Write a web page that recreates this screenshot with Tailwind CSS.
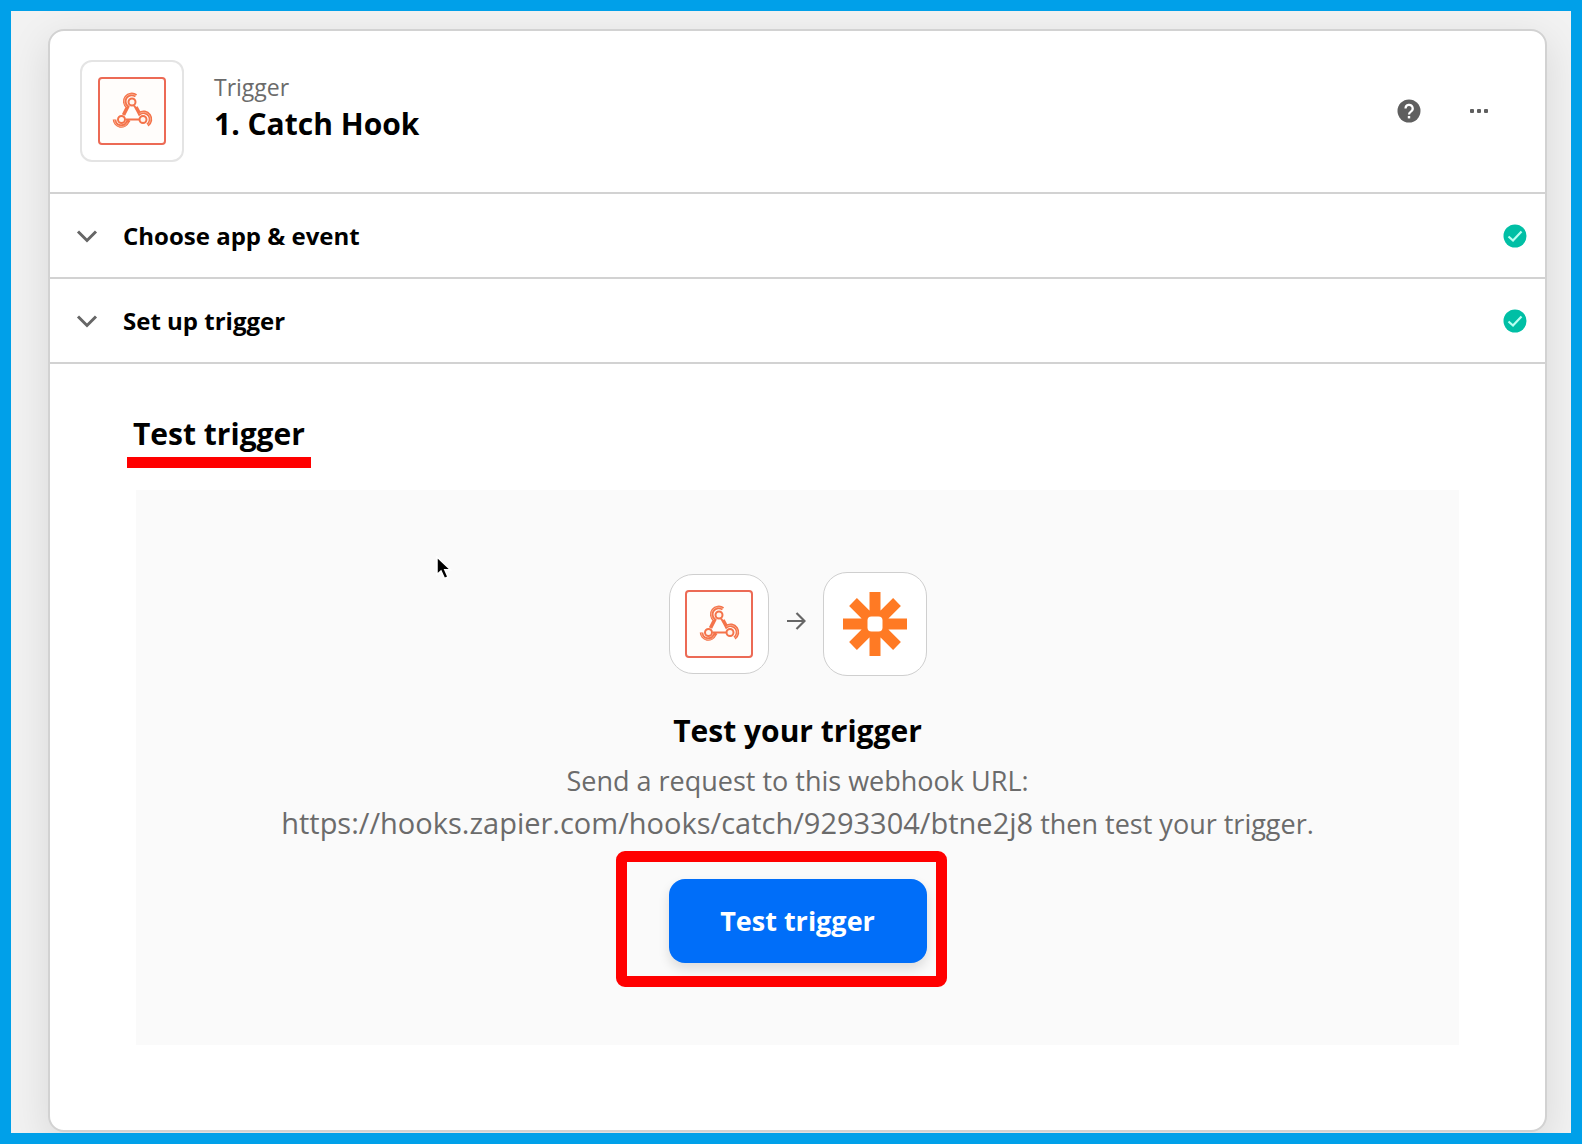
<!DOCTYPE html>
<html lang="en">
<head>
    <meta charset="UTF-8">
    <meta name="viewport" content="width=device-width, initial-scale=1.0">
    <title>Catch Hook - Test trigger</title>
    <script src="https://cdn.jsdelivr.net/npm/@tailwindcss/browser@4"></script>
</head>
<body class="flex min-h-screen border-[11px] border-[#00a0e9] bg-[#f2f2f2] font-['Open_Sans',sans-serif] text-black">

    <!-- Webhook icon, shared by both tiles -->
    <svg class="hidden">
        <symbol id="webhook" viewBox="0 0 68 68">
            <rect x="1" y="1" width="66" height="66" rx="3" fill="#fffdfb" stroke="#ec6a55" stroke-width="2"/>
            <g fill="none" stroke="#f4734a" stroke-width="3.600">
                <path d="M38 18.800A6.800 6.800 0 0 0 29.500 30L25.500 38"/>
                <path d="M16.500 42.500A6.800 6.800 0 0 0 29.500 45L31 43"/>
                <path d="M38 30L41.500 36.500A6.800 6.800 0 0 1 49.500 48"/>
            </g>
            <g fill="none" stroke="#f9a98a" stroke-width="1">
                <path d="M38 18.800A6.800 6.800 0 0 0 29 30"/>
                <path d="M16.500 42.500A6.800 6.800 0 0 0 29.500 45.500"/>
                <path d="M41.500 36.500A6.800 6.800 0 0 1 49.500 48"/>
            </g>
            <g fill="#fff6ef" stroke="#f4734a" stroke-width="2">
                <path fill="none" d="M36 28.500L38.500 32M42 42.500H28"/>
                <circle cx="34" cy="25" r="3.500"/>
                <circle cx="23.500" cy="42.500" r="3.500"/>
                <circle cx="45" cy="42.500" r="3.500"/>
            </g>
        </symbol>
    </svg>

    <main class="mt-[18px] mr-6 ml-[37px] flex-1 self-start rounded-2xl border-2 border-[#d2d2d2] bg-white shadow-[0_12px_40px_2px_rgba(0,0,0,0.1)]">

        <header class="flex items-center border-b-2 border-[#d2d2d2] px-[30px] pt-[29px] pb-[30px]">
            <div class="flex h-[102px] w-[104px] items-center justify-center rounded-xl border-2 border-[#e4e4e4]">
                <svg class="size-[68px]"><use href="#webhook"/></svg>
            </div>
            <div class="ml-[30px] flex-1 pb-1.5">
                <p class="text-[23px]/[32px] text-[#6b6b6b]">Trigger</p>
                <h1 class="text-[30px]/[42px] font-bold">1. Catch Hook</h1>
            </div>
            <button class="mr-[46px]" aria-label="Help">
                <svg class="size-6" viewBox="0 0 24 24">
                    <circle cx="12" cy="12" r="11.500" fill="#5f5f5f"/>
                    <path d="M8.500 9.500a3.600 3.600 0 1 1 5.400 3.100c-1.300.8-1.900 1.300-1.900 2.900" fill="none" stroke="#fff" stroke-width="2.200"/>
                    <rect x="10.800" y="17" width="2.400" height="2.400" fill="#fff"/>
                </svg>
            </button>
            <button class="mr-6" aria-label="More options">
                <svg class="size-6" viewBox="0 0 24 24" fill="#5f5f5f">
                    <rect x="3" y="10" width="4" height="4" rx="1"/>
                    <rect x="10" y="10" width="4" height="4" rx="1"/>
                    <rect x="17" y="10" width="4" height="4" rx="1"/>
                </svg>
            </button>
        </header>

        <button class="flex h-[85px] w-full items-center border-b-2 border-[#d2d2d2] pr-[18px] pl-[25px] text-left">
            <svg class="size-6" viewBox="0 0 24 24" fill="none" stroke="#666" stroke-width="3"><path d="M3 7.500L12 16.500L21 7.500"/></svg>
            <span class="ml-6 flex-1 text-2xl font-bold">Choose app &amp; event</span>
            <svg class="size-6" viewBox="0 0 24 24"><circle cx="12" cy="12" r="11.500" fill="#00bfa5"/><path d="M5.500 12.500L10 16.500L18.500 7.500" fill="none" stroke="#b9fff2" stroke-width="2.200"/></svg>
        </button>
        <button class="flex h-[85px] w-full items-center border-b-2 border-[#d2d2d2] pr-[18px] pl-[25px] text-left">
            <svg class="size-6" viewBox="0 0 24 24" fill="none" stroke="#666" stroke-width="3"><path d="M3 7.500L12 16.500L21 7.500"/></svg>
            <span class="ml-6 flex-1 text-2xl font-bold">Set up trigger</span>
            <svg class="size-6" viewBox="0 0 24 24"><circle cx="12" cy="12" r="11.500" fill="#00bfa5"/><path d="M5.500 12.500L10 16.500L18.500 7.500" fill="none" stroke="#b9fff2" stroke-width="2.200"/></svg>
        </button>

        <section class="px-[83px] pt-[49px] pb-[85px]">
            <h2 class="relative w-fit pb-0.5 text-[30px]/[42px] font-bold">
                Test trigger
                <span class="absolute -inset-x-1.5 top-full h-[11px] bg-[#ff0000]"></span>
            </h2>

            <div class="relative mx-[3px] mt-[33px] flex flex-col items-center bg-[#fafafa] py-[82px] text-center">
                <!-- Mouse pointer -->
                <svg class="absolute top-[66px] left-[300px] h-6 w-4" viewBox="0 0 16 24">
                    <path d="M1 1V18.500L5 15L8.500 22.500L12 21L8.800 13.800H14.500Z" fill="#000" stroke="#fff" stroke-width="1.500"/>
                </svg>

                <div class="flex items-center">
                    <div class="flex size-[100px] items-center justify-center rounded-3xl border border-[#cfcfcf] bg-white">
                        <svg class="size-[68px]"><use href="#webhook"/></svg>
                    </div>
                    <svg class="mx-[17px] mb-1.5 size-5" viewBox="0 0 20 20" fill="none" stroke="#666" stroke-width="2.200"><path d="M1 10H18M10.500 2L18.500 10L10.500 18"/></svg>
                    <div class="flex size-[104px] items-center justify-center rounded-3xl border border-[#cfcfcf] bg-white">
                        <svg class="size-[66px]" viewBox="0 0 66 66">
                            <g stroke="#ff7a24" stroke-width="11"><path d="M33 1V65M1 33H65M11 11L55 55M55 11L11 55"/></g>
                            <rect x="25.500" y="25.500" width="15" height="15" rx="4" fill="#fff"/>
                        </svg>
                    </div>
                </div>

                <h3 class="mt-[34px] text-[30px]/[42px] font-bold">Test your trigger</h3>
                <p class="mt-2 text-[27px]/[42px] text-[#6b6b6b]">Send a request to this webhook URL:<br><span class="text-[29px]/[42px]">https://hooks.zapier.com/hooks/catch/9293304/btne2j8</span> then test your trigger.</p>

                <div class="relative mt-[34px]">
                    <button class="h-[84px] w-[258px] rounded-2xl bg-[#006ef9] text-[27px] font-bold text-white shadow-[0_6px_12px_rgba(0,0,0,0.12)]">Test trigger</button>
                    <!-- Highlight around the button -->
                    <div class="pointer-events-none absolute -top-7 -right-5 -bottom-6 -left-[53px] rounded-[9px] border-[11px] border-[#ff0000]"></div>
                </div>
            </div>
        </section>
    </main>
</body>
</html>
